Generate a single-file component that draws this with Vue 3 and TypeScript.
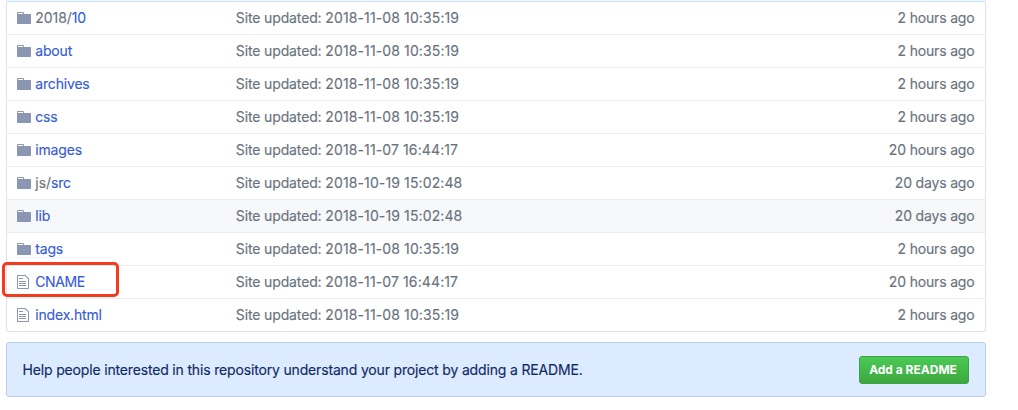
<script setup lang="ts">
interface Entry {
  parent?: string
  name: string
  kind: 'dir' | 'file'
  date: string
  time: string
  age: string
  hovered?: boolean
  marked?: boolean
}

const entries: Entry[] = [
  { parent: '2018/', name: '10', kind: 'dir', date: '2018-11-08', time: '10:35:19', age: '2 hours ago' },
  { name: 'about', kind: 'dir', date: '2018-11-08', time: '10:35:19', age: '2 hours ago' },
  { name: 'archives', kind: 'dir', date: '2018-11-08', time: '10:35:19', age: '2 hours ago' },
  { name: 'css', kind: 'dir', date: '2018-11-08', time: '10:35:19', age: '2 hours ago' },
  { name: 'images', kind: 'dir', date: '2018-11-07', time: '16:44:17', age: '20 hours ago' },
  { parent: 'js/', name: 'src', kind: 'dir', date: '2018-10-19', time: '15:02:48', age: '20 days ago' },
  { name: 'lib', kind: 'dir', date: '2018-10-19', time: '15:02:48', age: '20 days ago', hovered: true },
  { name: 'tags', kind: 'dir', date: '2018-11-08', time: '10:35:19', age: '2 hours ago' },
  { name: 'CNAME', kind: 'file', date: '2018-11-07', time: '16:44:17', age: '20 hours ago', marked: true },
  { name: 'index.html', kind: 'file', date: '2018-11-08', time: '10:35:19', age: '2 hours ago' },
]
</script>

<template>
  <main class="page">
    <section class="files">
      <div v-for="entry in entries" :key="entry.name" class="row" :class="{ hovered: entry.hovered, marked: entry.marked }">
        <div class="icon">
          <svg v-if="entry.kind === 'dir'" width="14" height="16" viewBox="0 0 14 16">
            <path fill-rule="evenodd" d="M13 4H7V3c0-.66-.31-1-1-1H1c-.55 0-1 .45-1 1v10c0 .55.45 1 1 1h12c.55 0 1-.45 1-1V5c0-.55-.45-1-1-1zM6 4H1V3h5v1z" />
          </svg>
          <svg v-else width="12" height="16" viewBox="0 0 12 16">
            <path fill-rule="evenodd" d="M6 5H2V4h4v1zM2 8h7V7H2v1zm0 2h7V9H2v1zm0 2h7v-1H2v1zm10-7.5V14c0 .55-.45 1-1 1H1c-.55 0-1-.45-1-1V2c0-.55.45-1 1-1h7.5L12 4.500zM11 5L8 2H1v12h10V5z" />
          </svg>
        </div>
        <div class="name"><span v-if="entry.parent" class="parent">{{ entry.parent }}</span><a>{{ entry.name }}</a></div>
        <div class="message">Site updated: <span class="stamp">{{ entry.date }} {{ entry.time }}</span></div>
        <div class="age">{{ entry.age }}</div>
        <span v-if="entry.marked" class="marker"></span>
      </div>
    </section>
    <section class="notice">
      <span class="help">Help people interested in this repository understand your project by adding a README.</span>
      <button class="add" type="button">Add a README</button>
    </section>
  </main>
</template>

<style>
body {
  background: #fff;
  overflow: hidden;
}
</style>

<style scoped>
.page {
  box-sizing: border-box;
  width: 1018px;
  height: 410px;
  padding: 1px 32px 0 6px;
  background: linear-gradient(#f1f8ff, #f1f8ff) 6px 0 / 980px 1px no-repeat #fff;
  font-family: Inter, "Liberation Sans", sans-serif;
  font-size: 14px;
  line-height: 20px;
  color: #6a737d;
  -webkit-text-stroke-width: 0.15px;
}
.files {
  border: 1px solid #dfe2e5;
  border-top: 0;
  border-radius: 0 0 3px 3px;
}
.row {
  position: relative;
  display: flex;
  box-sizing: border-box;
  height: 33px;
  padding: 6px 10.500px 6px 10px;
  border-top: 1px solid #eaecef;
}
.row:first-child {
  border-top-color: #c8e1ff;
}
.hovered {
  background: #f6f8fa;
}
.icon {
  width: 18.300px;
  padding-top: 2px;
}
.icon svg {
  display: block;
  fill: #8a96b2;
}
.name {
  width: 200.500px;
  letter-spacing: -0.18px;
}
.name .parent {
  letter-spacing: -0.05px;
}
.name a {
  color: #365cd5;
}
.marked .name {
  letter-spacing: -0.42px;
}
.message {
  flex: 1;
  letter-spacing: -0.13px;
}
.stamp {
  letter-spacing: 0.12px;
}
.age {
  letter-spacing: -0.17px;
}
.marker {
  position: absolute;
  left: -5px;
  top: -4px;
  box-sizing: border-box;
  width: 116.500px;
  height: 35px;
  border: 3px solid #f43b1d;
  border-radius: 5px;
}
.notice {
  display: flex;
  align-items: center;
  justify-content: space-between;
  box-sizing: border-box;
  height: 55px;
  margin-top: 10px;
  padding: 0 16px 0 15.500px;
  border: 1px solid #bdcde1;
  border-radius: 3px;
  background: #dcebff;
  color: #102a66;
}
.help {
  letter-spacing: -0.165px;
}
.add {
  box-sizing: border-box;
  width: 110px;
  height: 28px;
  padding: 0 2px 0 0;
  border: 1px solid #39a345;
  border-radius: 3px;
  background: linear-gradient(#4acb54, #3da63f);
  color: #fff;
  font: 700 12px/20px Inter, "Liberation Sans", sans-serif;
  -webkit-text-stroke-width: 0;
}
</style>
